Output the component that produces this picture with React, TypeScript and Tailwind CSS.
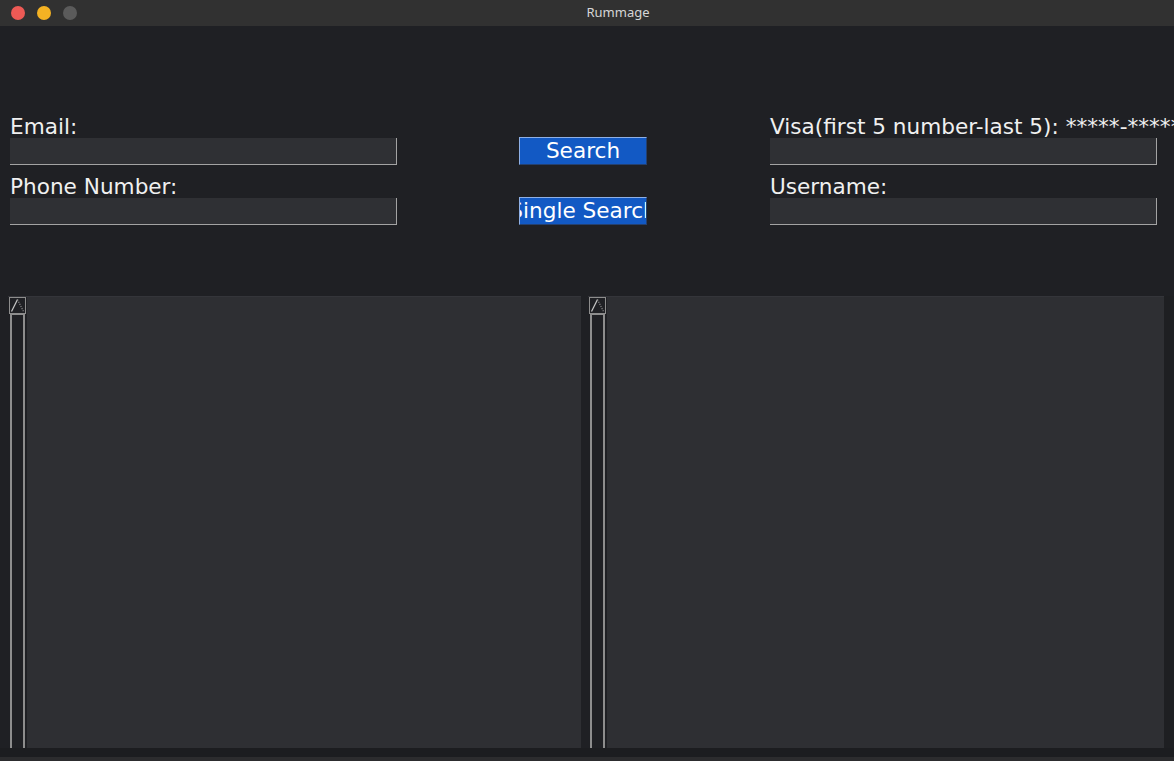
import React from 'react';

const labelFont = { fontFamily: '"DejaVu Sans", Verdana, sans-serif' };

function TrafficLights() {
  return (
    <div className="flex items-center gap-[12px] pl-[11px]">
      <span className="block h-[14px] w-[14px] rounded-full bg-[#ed5a55]" />
      <span className="block h-[14px] w-[14px] rounded-full bg-[#f4b223]" />
      <span className="block h-[14px] w-[14px] rounded-full bg-[#5b5b5b]" />
    </div>
  );
}

function Field({ label }: { label: string }) {
  return (
    <div className="flex flex-col">
      <div className="h-[22px] whitespace-nowrap text-[21.6px] leading-[22px] text-[#f0f0f0]">{label}</div>
      <div className="h-[27px] w-[387px] border-b border-r border-[#a3a3a3] bg-[#2f3034]" />
    </div>
  );
}

function BlueButton({ children }: { children: React.ReactNode }) {
  return (
    <div className="flex h-[28px] w-[128px] items-center justify-center overflow-hidden whitespace-nowrap border border-t-[#8fb0e6] border-l-[#8fb0e6] border-b-[#24406f] border-r-[#24406f] bg-[#1259c4] text-[21.6px] leading-[22px] text-white">
      {children}
    </div>
  );
}

function ScrollBar() {
  return (
    <div className="flex w-[17px] flex-col">
      {/* up arrow */}
      <div className="flex h-[17px] w-[17px] items-center justify-center border border-[#8d8d8d]">
        <svg width="15" height="15" viewBox="0 0 15 15">
          <line x1="1.5" y1="13.5" x2="7.5" y2="1.5" stroke="#c4c4c4" strokeWidth="1.2" />
          <line x1="7.5" y1="1.5" x2="13.5" y2="13.5" stroke="#8a8a8a" strokeWidth="1.2" strokeDasharray="1.2 1.2" />
        </svg>
      </div>
      {/* trough */}
      <div className="ml-[1px] w-[15px] flex-1 border-x-2 border-b-0 border-t border-[#8d8d8d] bg-[#1f2024]" />
    </div>
  );
}

function TextPanel({ width }: { width: string }) {
  return (
    <div className={`flex flex-col ${width}`}>
      <div className="h-[1px] bg-[#34353a]" />
      <div className="flex flex-1 pl-[1px]">
        <ScrollBar />
        <div className="ml-[1px] flex-1 bg-[#2e2f33]" />
      </div>
    </div>
  );
}

export default function App() {
  return (
    <div className="flex h-[761px] w-[1174px] flex-col overflow-hidden bg-[#1f2024]" style={labelFont}>
      {/* Title bar */}
      <div className="relative flex h-[26px] items-center bg-[#313131]">
        <TrafficLights />
        <div
          className="absolute inset-y-0 left-[62px] right-0 flex items-center justify-center text-[13px] text-[#d6d6d6]"
          style={{ fontFamily: '"Noto Sans", sans-serif' }}
        >
          Rummage
        </div>
      </div>

      {/* Search form */}
      <div className="flex h-[270px] pl-[10px] pt-[90px]">
        <div className="flex w-[387px] flex-col gap-[11px]">
          <Field label="Email:" />
          <Field label="Phone Number:" />
        </div>
        <div className="ml-[122px] flex flex-col gap-[32px] pt-[21px]">
          <BlueButton>Search</BlueButton>
          <BlueButton>Single Search</BlueButton>
        </div>
        <div className="ml-[123px] flex w-[387px] flex-col gap-[11px]">
          <Field label="Visa(first 5 number-last 5): *****-*****" />
          <Field label="Username:" />
        </div>
      </div>

      {/* Result panels */}
      <div className="flex h-[452px] pl-[8px]">
        <TextPanel width="w-[573px]" />
        <div className="w-[7px]" />
        <TextPanel width="w-[576px]" />
        <div className="flex-1 bg-[#1e1f22]" />
      </div>
      <div className="h-[9px] bg-[#1c1d20]" />
      <div className="h-[4px] bg-[#2c2c2e]" />
    </div>
  );
}
